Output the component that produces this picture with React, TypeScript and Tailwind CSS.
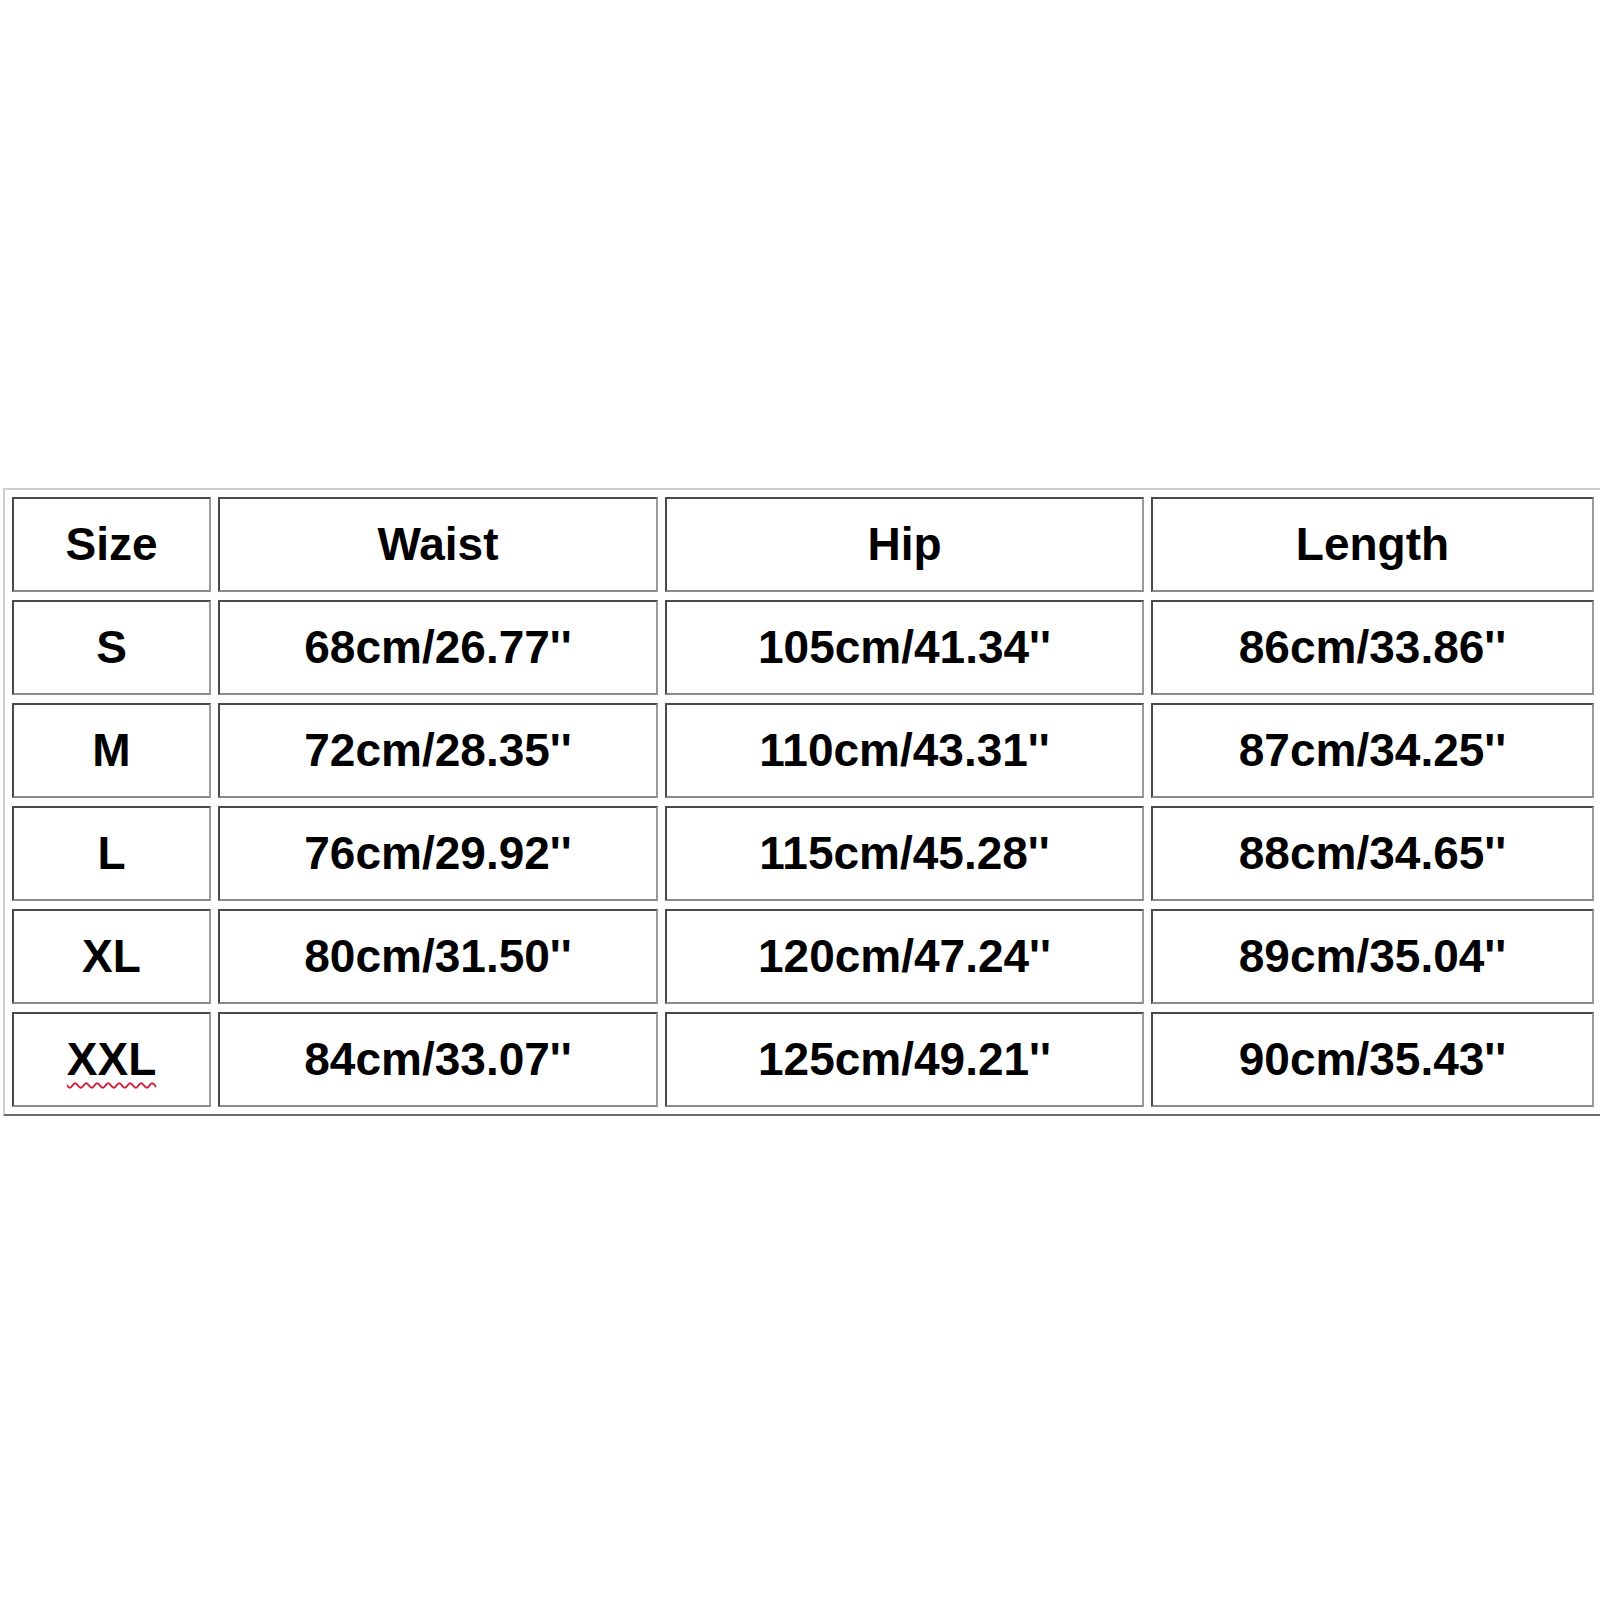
const header = ['Size', 'Waist', 'Hip', 'Length']

const rows = [
  ['S', "68cm/26.77''", "105cm/41.34''", "86cm/33.86''"],
  ['M', "72cm/28.35''", "110cm/43.31''", "87cm/34.25''"],
  ['L', "76cm/29.92''", "115cm/45.28''", "88cm/34.65''"],
  ['XL', "80cm/31.50''", "120cm/47.24''", "89cm/35.04''"],
  ['XXL', "84cm/33.07''", "125cm/49.21''", "90cm/35.43''"],
]

function Cell({ children }: { children: React.ReactNode }) {
  return (
    <div className="flex h-[95px] items-center justify-center border-2 border-t-[#4a4a4a] border-l-[#4a4a4a] border-r-[#9a9a9a] border-b-[#8a8a8a] bg-white">
      {children}
    </div>
  )
}

export default function App() {
  return (
    <div className="h-[1600px] w-[1600px] overflow-hidden bg-white font-['Liberation_Sans',Arial,sans-serif] text-[46px] font-bold text-black">
      <div className="ml-[3px] mt-[488px] w-[1602px] border-2 border-t-[#cfcfcf] border-l-[#cfcfcf] border-r-[#7a7a7a] border-b-[#6a6a6a] p-[7px]">
        <div className="grid grid-cols-[199px_440px_479px_443px] gap-x-[7px] gap-y-[8px]">
          {header.map((h) => (
            <Cell key={h}>{h}</Cell>
          ))}
          {rows.map((row) =>
            row.map((value, i) => (
              <Cell key={row[0] + i}>
                {value === 'XXL' ? (
                  <span className="underline decoration-wavy decoration-[#d0203a] decoration-[1.5px] underline-offset-[7px]">
                    {value}
                  </span>
                ) : (
                  value
                )}
              </Cell>
            ))
          )}
        </div>
      </div>
    </div>
  )
}
